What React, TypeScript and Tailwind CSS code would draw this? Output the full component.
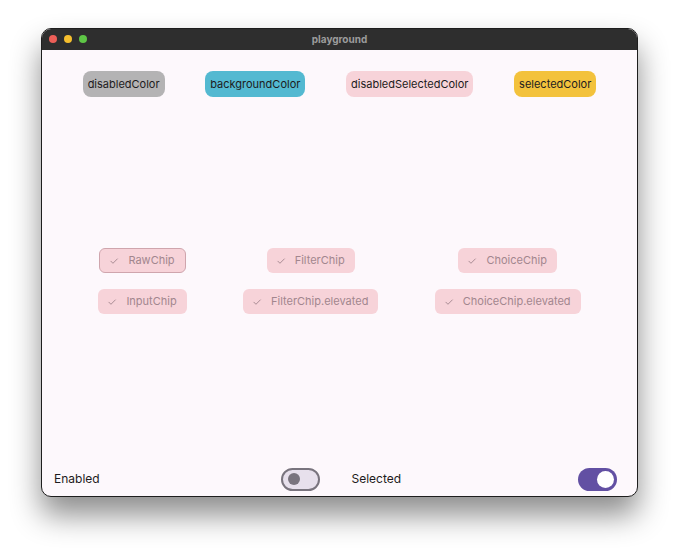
import React from "react";

const font = { fontFamily: "Inter, Roboto, 'Liberation Sans', sans-serif" };

function Check() {
  return (
    <svg width="10" height="10" viewBox="0 0 24 24" className="shrink-0">
      <path d="M4.5 12.5l5 5L20 7" fill="none" stroke="currentColor" strokeWidth="2.2" strokeLinecap="round" strokeLinejoin="round" />
    </svg>
  );
}

function Chip({ label, bordered = false }: { label: string; bordered?: boolean }) {
  return (
    <div
      className={`flex h-[25px] items-center gap-[9px] rounded-[6px] bg-[#f7d3d9] pl-[9px] pr-[10px] text-[11px] text-[#a2868e] ${
        bordered ? "border border-[#cfa5ad] pl-[8px] pr-[9px]" : ""
      }`}
    >
      <Check />
      <span>{label}</span>
    </div>
  );
}

function Swatch({ label, color }: { label: string; color: string }) {
  return (
    <div className={`flex h-[26px] items-center rounded-[8px] px-[5px] text-[11px] text-[#1d1b20] ${color}`}>
      {label}
    </div>
  );
}

export default function App() {
  return (
    <div className="h-[552px] w-[680px] bg-white pt-[28px] pl-[41px]" style={font}>
      <div className="flex h-[469px] w-[597px] flex-col overflow-hidden rounded-[10px] border border-[#1e1e1e] bg-[#fdf8fc] shadow-[0_18px_30px_rgba(0,0,0,0.45)]">
        {/* Title bar */}
        <div className="relative flex h-[21px] shrink-0 items-center justify-center bg-[#2e2e2e]">
          <div className="absolute left-[7px] top-[6px] flex gap-[7px]">
            <span className="h-[8px] w-[8px] rounded-full bg-[#ed5f58]" />
            <span className="h-[8px] w-[8px] rounded-full bg-[#f6bf2e]" />
            <span className="h-[8px] w-[8px] rounded-full bg-[#5ec646]" />
          </div>
          <span className="text-[10px] font-bold text-[#9c9c9c]">playground</span>
        </div>

        {/* Colour chips */}
        <div className="flex justify-evenly pt-[21px]">
          <Swatch label="disabledColor" color="bg-[#b4b3b4]" />
          <Swatch label="backgroundColor" color="bg-[#53b9d1]" />
          <Swatch label="disabledSelectedColor" color="bg-[#f7d3d9]" />
          <Swatch label="selectedColor" color="bg-[#f3c23c]" />
        </div>

        {/* Chip grid */}
        <div className="flex flex-1 items-center justify-evenly pt-[7px]">
          <div className="flex flex-col items-center gap-[16px]">
            <Chip label="RawChip" bordered />
            <Chip label="InputChip" />
          </div>
          <div className="flex flex-col items-center gap-[16px]">
            <Chip label="FilterChip" />
            <Chip label="FilterChip.elevated" />
          </div>
          <div className="flex flex-col items-center gap-[16px]">
            <Chip label="ChoiceChip" />
            <Chip label="ChoiceChip.elevated" />
          </div>
        </div>

        {/* Switches */}
        <div className="flex h-[38px] shrink-0 items-center pt-[4px]">
          <div className="flex flex-1 items-center justify-between pl-[12px] pr-[20px]">
            <span className="text-[12px] text-[#1d1b20]">Enabled</span>
            <div className="flex h-[23px] w-[39px] items-center rounded-full border-2 border-[#79747e] bg-[#e7e0ec] pl-[5px]">
              <span className="h-[12px] w-[12px] rounded-full bg-[#79747e]" />
            </div>
          </div>
          <div className="flex flex-1 items-center justify-between pl-[12px] pr-[20px]">
            <span className="text-[12px] text-[#1d1b20]">Selected</span>
            <div className="flex h-[23px] w-[39px] items-center justify-end rounded-full bg-[#6250a3] pr-[3px]">
              <span className="h-[17px] w-[17px] rounded-full bg-white" />
            </div>
          </div>
        </div>
      </div>
    </div>
  );
}
